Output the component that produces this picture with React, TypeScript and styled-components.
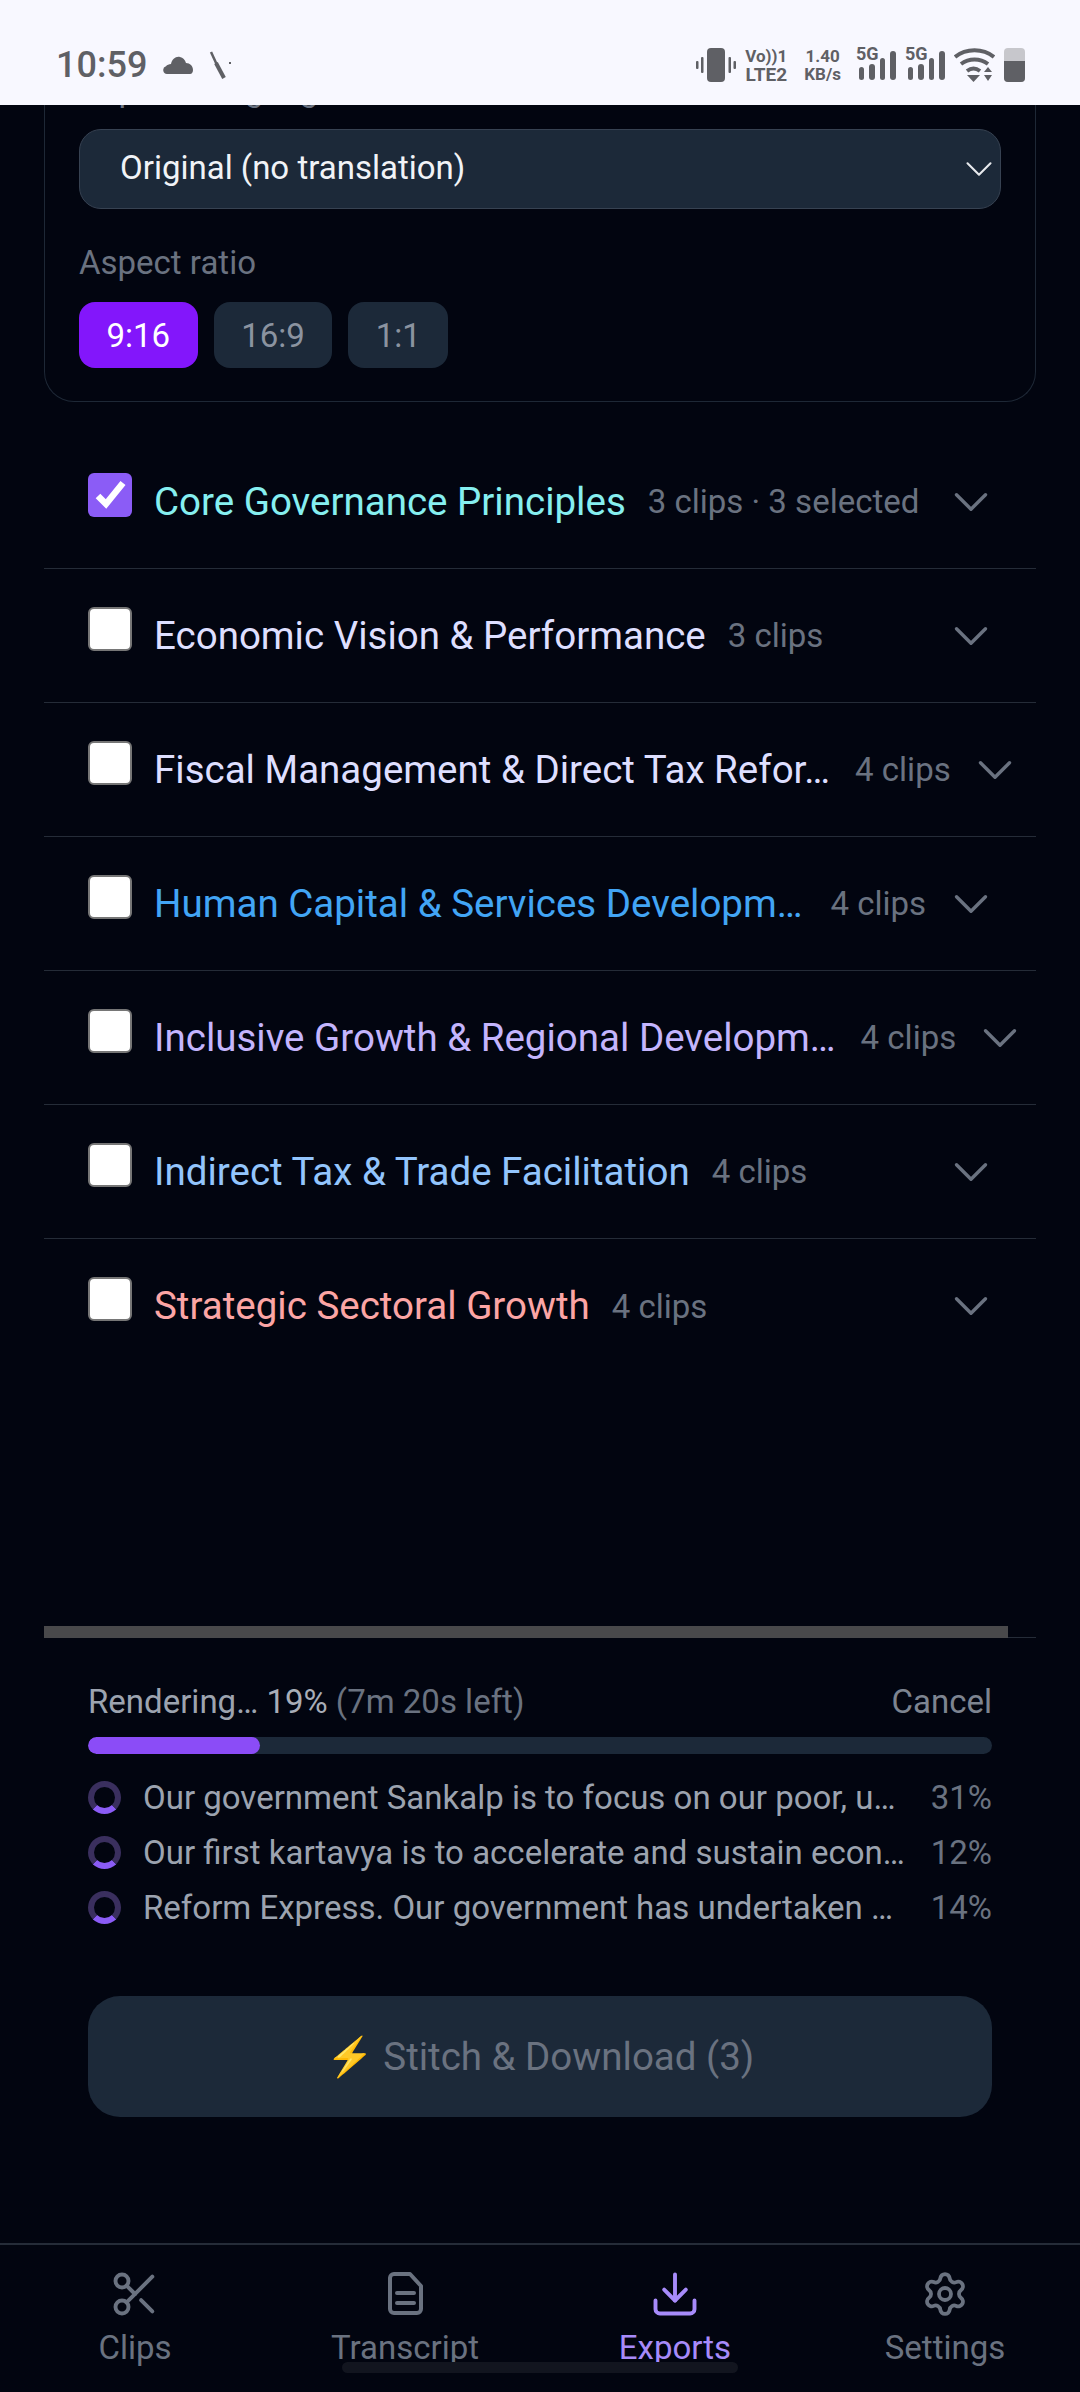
import { createGlobalStyle, styled } from "styled-components";
import { ChevronDown, Download, Scissors, Settings } from "lucide-react";

const Global = createGlobalStyle`
  html, body {
    margin: 0;
    padding: 0;
    background: #020510;
  }
  * {
    box-sizing: border-box;
  }
`;

const Page = styled.div`
  width: 1080px;
  height: 2392px;
  display: flex;
  flex-direction: column;
  background: #020510;
  font-family: Roboto, "Liberation Sans", sans-serif;
  overflow: hidden;
`;

const StatusBar = styled.div`
  height: 105px;
  flex: none;
  background: #f8f8ff;
  color: #5f6065;
  display: flex;
  align-items: center;
  justify-content: space-between;
  padding: 25px 55px 0 56px;
`;

const StatusLeft = styled.div`
  display: flex;
  align-items: center;
  gap: 16px;
`;

const Clock = styled.div`
  font-size: 36px;
  font-weight: 500;
  line-height: 38px;
`;

const StatusRight = styled.div`
  display: flex;
  align-items: center;
  gap: 9px;
`;

const TinyStack = styled.div<{ $wide?: boolean }>`
  display: flex;
  flex-direction: column;
  align-items: center;
  font-weight: 700;
  margin: ${({ $wide }) => ($wide ? "0 6px 0 8px" : "0")};
`;

const TinyTop = styled.span<{ $size: number }>`
  font-size: ${({ $size }) => $size}px;
  line-height: 18px;
`;

const TinyBottom = styled.span<{ $size: number }>`
  font-size: ${({ $size }) => $size}px;
  line-height: 19px;
`;

const Signal = styled.div`
  position: relative;
  width: 40px;
  height: 34px;
`;

const SignalLabel = styled.span`
  position: absolute;
  left: 0;
  top: -3px;
  font-size: 18px;
  font-weight: 700;
  line-height: 18px;
`;

const Content = styled.div`
  flex: 1;
  padding: 0 44px;
  display: flex;
  flex-direction: column;
`;

const Card = styled.div`
  height: 297px;
  flex: none;
  border: 1px solid #1e2836;
  border-top: none;
  border-radius: 0 0 30px 30px;
  padding: 0 34px;
  overflow: hidden;
`;

const ClippedLabel = styled.div`
  margin: -33px 0 21px;
  color: #6a7280;
  font-size: 33px;
  line-height: 36px;
  white-space: nowrap;
`;

const Select = styled.div`
  height: 80px;
  border: 1.5px solid #374252;
  border-radius: 22px;
  background: #1c2939;
  color: #f1f3f7;
  font-size: 33px;
  display: flex;
  align-items: center;
  justify-content: space-between;
  padding-left: 40px;
`;

const SelectValue = styled.span`
  margin-bottom: 3px;
`;

const SelectChevron = styled(ChevronDown)`
  margin-right: -2px;
  flex: none;
`;

const FieldLabel = styled.div`
  margin-top: 36px;
  color: #6a7280;
  font-size: 33px;
  line-height: 36px;
`;

const Pills = styled.div`
  display: flex;
  gap: 16px;
  margin-top: 21px;
`;

const Pill = styled.div<{ $active?: boolean }>`
  height: 66px;
  padding: 0 27.5px;
  border-radius: 16px;
  display: flex;
  align-items: center;
  font-size: 33px;
  background: ${({ $active }) => ($active ? "#8316fb" : "#1c2939")};
  color: ${({ $active }) => ($active ? "#ffffff" : "#8b93a0")};
`;

const Groups = styled.div`
  margin-top: 33px;
`;

const Row = styled.div`
  height: 134px;
  display: flex;
  align-items: center;
  padding-left: 44px;
  border-bottom: 1px solid #252c38;

  &:last-child {
    border-bottom: none;
  }

  &::after {
    content: "";
    flex: 0 1 36px;
  }
`;

const Box = styled.div<{ $checked?: boolean }>`
  width: 44px;
  height: 44px;
  flex: none;
  margin-bottom: 14px;
  border-radius: 6px;
  display: flex;
  align-items: center;
  justify-content: center;
  background: ${({ $checked }) => ($checked ? "#8b5cf6" : "#ffffff")};
  border: ${({ $checked }) => ($checked ? "none" : "2px solid #767676")};
`;

const GroupName = styled.div<{ $color: string }>`
  margin-left: 22px;
  flex: none;
  font-size: 38.5px;
  line-height: 44px;
  color: ${({ $color }) => $color};
  white-space: nowrap;
`;

const GroupMeta = styled.div<{ $gap: number }>`
  margin-left: ${({ $gap }) => $gap}px;
  flex: none;
  font-size: 33px;
  color: #6a7280;
  white-space: nowrap;
`;

const RowChevron = styled.div`
  margin-left: auto;
  padding-left: 15px;
  flex: none;
  display: flex;
  color: #6a7280;
`;

const Footer = styled.div`
  position: relative;
  margin: 0 44px;
  border-top: 1px solid #252c38;
  padding: 46px 44px 0;
  height: 606px;
  flex: none;
`;

const Scrollbar = styled.div`
  position: absolute;
  left: 0;
  top: -12px;
  width: 964px;
  height: 12px;
  background: #49494b;
`;

const ProgressHead = styled.div`
  display: flex;
  justify-content: space-between;
  font-size: 33px;
  line-height: 36px;
  color: #9ca3af;
`;

const Percent = styled.span`
  color: #a8adb7;
`;

const TimeLeft = styled.span`
  color: #6a7280;
`;

const Cancel = styled.span`
  color: #7d8490;
`;

const Track = styled.div`
  height: 17px;
  margin-top: 17px;
  border-radius: 9px;
  background: #1c2939;
  overflow: hidden;
`;

const Fill = styled.div`
  height: 100%;
  border-radius: 9px;
  background: #8b4cf7;
`;

const Jobs = styled.div`
  margin-top: 21px;
  display: flex;
  flex-direction: column;
  gap: 11px;
`;

const Job = styled.div`
  height: 44px;
  display: flex;
  align-items: center;
`;

const Spinner = styled.div`
  width: 33px;
  height: 33px;
  flex: none;
  border-radius: 50%;
  border: 6px solid #3a2f5e;
  border-bottom-color: #8b5cf6;
`;

const JobName = styled.div`
  margin-left: 22px;
  flex: 1;
  min-width: 0;
  font-size: 33px;
  color: #9ca3af;
  white-space: nowrap;
`;

const JobPct = styled.div`
  flex: none;
  font-size: 33px;
  color: #6a7280;
`;

const Stitch = styled.div`
  height: 121px;
  margin-top: 67px;
  border-radius: 32px;
  background: #1c2939;
  color: #6a7280;
  font-size: 38.5px;
  display: flex;
  align-items: center;
  justify-content: center;
  gap: 12px;
`;

const TabBar = styled.div`
  height: 149px;
  flex: none;
  border-top: 2px solid #252c38;
  display: grid;
  grid-template-columns: repeat(4, 1fr);
  position: relative;
`;

const Tab = styled.div<{ $active?: boolean }>`
  display: flex;
  flex-direction: column;
  align-items: center;
  padding-top: 23px;
  gap: 9px;
  color: ${({ $active }) => ($active ? "#a78bfa" : "#6a7280")};
  font-size: 33px;
  line-height: 38px;
`;

const TabIcon = styled.div`
  height: 52px;
  display: flex;
  align-items: center;
  justify-content: center;
`;

const HomeBar = styled.div`
  position: absolute;
  left: 342px;
  top: 117px;
  width: 396px;
  height: 11px;
  border-radius: 6px;
  background: #12151f;
`;

const Bars = () => (
  <svg width="40" height="34" viewBox="0 0 40 34" fill="#5f6065">
    <rect x="3" y="19" width="5" height="13" rx="2.5" />
    <rect x="13" y="16" width="6" height="16" rx="3" />
    <rect x="24" y="10" width="5" height="22" rx="2.5" />
    <rect x="34" y="3" width="6" height="29" rx="3" />
  </svg>
);

const groups = [
  { name: "Core Governance Principles", color: "#86eff0", meta: "3 clips · 3 selected", gap: 22, checked: true },
  { name: "Economic Vision & Performance", color: "#dedfff", meta: "3 clips", gap: 22 },
  { name: "Fiscal Management & Direct Tax Refor…", color: "#dedfff", meta: "4 clips", gap: 25 },
  { name: "Human Capital & Services Developm…", color: "#42a5f5", meta: "4 clips", gap: 28 },
  { name: "Inclusive Growth & Regional Developm…", color: "#c4b5fd", meta: "4 clips", gap: 25 },
  { name: "Indirect Tax & Trade Facilitation", color: "#93c5fd", meta: "4 clips", gap: 22 },
  { name: "Strategic Sectoral Growth", color: "#fca5a5", meta: "4 clips", gap: 22 },
];

const jobs = [
  { name: "Our government Sankalp is to focus on our poor, u…", pct: "31%" },
  { name: "Our first kartavya is to accelerate and sustain econ…", pct: "12%" },
  { name: "Reform Express. Our government has undertaken …", pct: "14%" },
];

export default function App() {
  return (
    <Page>
      <Global />
      <StatusBar>
        <StatusLeft>
          <Clock>10:59</Clock>
          <svg width="30" height="20" viewBox="0 0 30 20" fill="#5f6065">
            <path d="M4 19a4 4 0 0 1-1-7.8C4 10 6 9 8 9c1-5 5-8 9-7 3 .5 5 3 6 6 4 0 7 3 7 7 0 2-1 4-3 4z" />
          </svg>
          <svg width="24" height="28" viewBox="0 0 24 28" fill="none" stroke="#5f6065">
            <path d="M2 1l6 13" strokeWidth="2.5" />
            <path d="M7 12l8 15" strokeWidth="4" />
            <path d="M20 12h2" strokeWidth="2" />
          </svg>
        </StatusLeft>
        <StatusRight>
          <svg width="40" height="34" viewBox="0 0 40 34" fill="#5f6065">
            <rect x="11" y="0" width="18" height="34" rx="4" />
            <rect x="5" y="9" width="2.5" height="16" rx="1" />
            <rect x="0" y="13" width="2.5" height="8" rx="1" />
            <rect x="32.5" y="9" width="2.5" height="16" rx="1" />
            <rect x="37.5" y="13" width="2.5" height="8" rx="1" />
          </svg>
          <TinyStack>
            <TinyTop $size={17}>Vo))1</TinyTop>
            <TinyBottom $size={19}>LTE2</TinyBottom>
          </TinyStack>
          <TinyStack $wide>
            <TinyTop $size={17}>1.40</TinyTop>
            <TinyBottom $size={17}>KB/s</TinyBottom>
          </TinyStack>
          <Signal>
            <SignalLabel>5G</SignalLabel>
            <Bars />
          </Signal>
          <Signal>
            <SignalLabel>5G</SignalLabel>
            <Bars />
          </Signal>
          <svg width="41" height="34" viewBox="0 0 41 34" fill="none" stroke="#5f6065" strokeWidth="4">
            <path d="M1 9c11-9 28-9 39 0" />
            <path d="M7 16c8-6 19-6 27 0" />
            <path d="M13 23c4-3 9-3 13 0" />
            <path d="M13 27h13l-6.500 7z" fill="#5f6065" stroke="none" />
            <path d="M30 24l4-5 4 5zM30 27h8l-4 6z" fill="#5f6065" stroke="none" />
          </svg>
          <svg width="21" height="34" viewBox="0 0 21 34">
            <rect x="0" y="0" width="21" height="34" rx="4" fill="#c7c7cc" />
            <path d="M0 13h21v17a4 4 0 0 1-4 4H4a4 4 0 0 1-4-4z" fill="#5f6065" />
          </svg>
        </StatusRight>
      </StatusBar>

      <Content>
        <Card>
          <ClippedLabel>Caption language</ClippedLabel>
          <Select>
            <SelectValue>Original (no translation)</SelectValue>
            <SelectChevron size={46} strokeWidth={1.1} color="#e5e7eb" />
          </Select>
          <FieldLabel>Aspect ratio</FieldLabel>
          <Pills>
            <Pill $active>9:16</Pill>
            <Pill>16:9</Pill>
            <Pill>1:1</Pill>
          </Pills>
        </Card>

        <Groups>
          {groups.map((g) => (
            <Row key={g.name}>
              <Box $checked={g.checked}>
                {g.checked && (
                  <svg width="44" height="44" viewBox="0 0 44 44" fill="none" stroke="#ffffff" strokeWidth="6.500">
                    <path d="M10 23l8 8 17-21" />
                  </svg>
                )}
              </Box>
              <GroupName $color={g.color}>{g.name}</GroupName>
              <GroupMeta $gap={g.gap}>{g.meta}</GroupMeta>
              <RowChevron>
                <ChevronDown size={58} strokeWidth={1.4} />
              </RowChevron>
            </Row>
          ))}
        </Groups>
      </Content>

      <Footer>
        <Scrollbar />
        <ProgressHead>
          <span>
            Rendering… <Percent>19%</Percent> <TimeLeft>(7m 20s left)</TimeLeft>
          </span>
          <Cancel>Cancel</Cancel>
        </ProgressHead>
        <Track>
          <Fill style={{ width: "19%" }} />
        </Track>
        <Jobs>
          {jobs.map((j) => (
            <Job key={j.pct}>
              <Spinner />
              <JobName>{j.name}</JobName>
              <JobPct>{j.pct}</JobPct>
            </Job>
          ))}
        </Jobs>
        <Stitch>⚡ Stitch &amp; Download (3)</Stitch>
      </Footer>

      <TabBar>
        <Tab>
          <TabIcon>
            <Scissors size={52} strokeWidth={1.8} />
          </TabIcon>
          Clips
        </Tab>
        <Tab>
          <TabIcon>
            <svg width="52" height="52" viewBox="0 0 52 52" fill="none" stroke="currentColor" strokeWidth="4" strokeLinecap="round" strokeLinejoin="round">
              <path d="M15 6h16l11 12v23a4 4 0 0 1-4 4H15a4 4 0 0 1-4-4V10a4 4 0 0 1 4-4z" />
              <path d="M18 25h17M18 35h17" />
            </svg>
          </TabIcon>
          Transcript
        </Tab>
        <Tab $active>
          <TabIcon>
            <Download size={52} strokeWidth={1.8} />
          </TabIcon>
          Exports
        </Tab>
        <Tab>
          <TabIcon>
            <Settings size={48} strokeWidth={1.9} />
          </TabIcon>
          Settings
        </Tab>
        <HomeBar />
      </TabBar>
    </Page>
  );
}
